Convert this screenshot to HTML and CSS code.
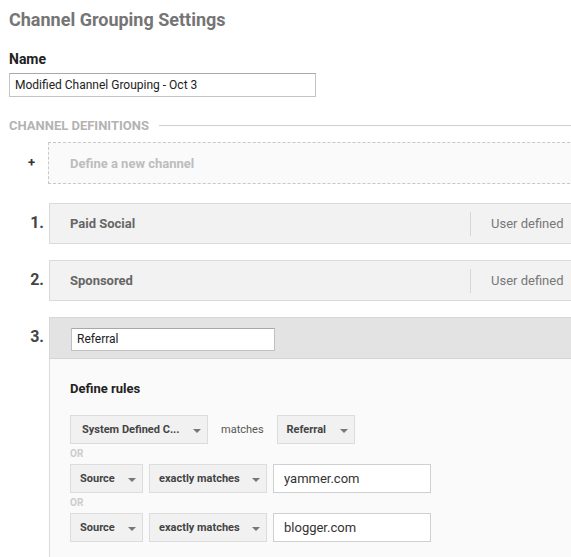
FILE: index.html
```html
<!DOCTYPE html>
<html>
<head>
<meta charset="utf-8">
<link rel="stylesheet" href="styles.css">
</head>
<body>
<div class="page">
  <h1 class="title">Channel Grouping Settings</h1>
  <div class="label">Name</div>
  <div class="name-input">Modified Channel Grouping - Oct 3</div>
  <div class="section-head"><span>CHANNEL DEFINITIONS</span><div class="rule-line"></div></div>
</div>

<div class="channels">
  <div class="item item-new">
    <div class="plus">+</div>
    <div class="new-box">Define a new channel</div>
  </div>

  <div class="item">
    <div class="num">1.</div>
    <div class="box">
      <div class="box-name">Paid Social</div>
      <div class="box-type">User defined</div>
    </div>
  </div>

  <div class="item">
    <div class="num">2.</div>
    <div class="box">
      <div class="box-name">Sponsored</div>
      <div class="box-type">User defined</div>
    </div>
  </div>

  <div class="item item-open">
    <div class="num">3.</div>
    <div class="open">
      <div class="open-head">
        <div class="head-input">Referral</div>
      </div>
      <div class="open-body">
        <div class="rules-title">Define rules</div>
        <div class="rule-row">
          <div class="sel w-sys"><span>System Defined C...</span><i class="caret"></i></div>
          <div class="op">matches</div>
          <div class="sel w-ref"><span>Referral</span><i class="caret"></i></div>
        </div>
        <div class="or">OR</div>
        <div class="rule-row">
          <div class="sel w-src"><span>Source</span><i class="caret"></i></div>
          <div class="sel w-exact"><span>exactly matches</span><i class="caret"></i></div>
          <div class="val">yammer.com</div>
        </div>
        <div class="or">OR</div>
        <div class="rule-row">
          <div class="sel w-src"><span>Source</span><i class="caret"></i></div>
          <div class="sel w-exact"><span>exactly matches</span><i class="caret"></i></div>
          <div class="val">blogger.com</div>
        </div>
      </div>
    </div>
  </div>
</div>
</body>
</html>
```

FILE: styles.css
```css
html, body {
  margin: 0;
  padding: 0;
  overflow: hidden;
  background: #fff;
}
body {
  font-family: Roboto, "Liberation Sans", Arial, sans-serif;
  color: #333;
}
.page {
  padding-left: 9px;
}
.title {
  margin: 10px 0 0;
  font-size: 18px;
  line-height: 20px;
  font-weight: 700;
  color: #757575;
}
.label {
  margin-top: 21px;
  font-size: 14px;
  line-height: 16px;
  font-weight: 700;
  color: #222;
}
.name-input {
  margin-top: 6px;
  box-sizing: border-box;
  width: 307px;
  height: 24px;
  border: 1px solid #c4c4c4;
  border-top-color: #a8a8a8;
  padding-left: 5px;
  font-size: 12px;
  line-height: 22px;
  color: #222;
  background: #fff;
}
.section-head {
  margin-top: 21px;
  display: flex;
  align-items: center;
  font-size: 13px;
  line-height: 15px;
  font-weight: 700;
  color: #b3b3b3;
}
.rule-line {
  flex: 1;
  height: 1px;
  background: #cfcfcf;
  margin-left: 10px;
}
.channels {
  margin-top: 9px;
  width: 620px;
}
.item {
  display: flex;
  margin-bottom: 16px;
}
.item-new {
  margin-bottom: 19px;
}
.plus {
  width: 48px;
  box-sizing: border-box;
  padding-right: 13px;
  text-align: right;
  font-size: 13px;
  font-weight: 700;
  color: #333;
  line-height: 42px;
}
.new-box {
  flex: 1;
  box-sizing: border-box;
  height: 42px;
  border: 1px dashed #c8c8c8;
  background: #fafafa;
  padding-left: 21px;
  line-height: 41px;
  font-size: 13px;
  font-weight: 700;
  color: #bdbdbd;
}
.num {
  width: 49px;
  box-sizing: border-box;
  padding-right: 5px;
  text-align: right;
  font-size: 16px;
  font-weight: 700;
  color: #444;
  line-height: 39px;
}
.box {
  flex: 1;
  box-sizing: border-box;
  height: 41px;
  border: 1px solid #dadada;
  background: #f2f2f2;
  display: flex;
  align-items: center;
}
.box-name {
  flex: 1;
  padding-left: 20px;
  font-size: 13px;
  font-weight: 700;
  color: #666;
}
.box-type {
  width: 149px;
  box-sizing: border-box;
  border-left: 1px solid #d6d6d6;
  height: 24px;
  line-height: 24px;
  padding-left: 20px;
  font-size: 13px;
  color: #777;
}
.open {
  flex: 1;
}
.open-head {
  box-sizing: border-box;
  height: 42px;
  background: #e3e3e3;
  border: 1px solid #d8d8d8;
  border-bottom-color: #d4d4d4;
  padding: 10px 0 0 21px;
}
.head-input {
  box-sizing: border-box;
  width: 204px;
  height: 23px;
  background: #fff;
  border: 1px solid #c0c0c0;
  border-top-color: #a8a8a8;
  padding-left: 5px;
  font-size: 12px;
  line-height: 21px;
  color: #222;
}
.open-body {
  background: #fafafa;
  border-left: 1px solid #dadada;
  padding: 22px 0 30px 20px;
}
.rules-title {
  font-size: 13px;
  line-height: 15px;
  font-weight: 700;
  color: #222;
  margin-bottom: 19px;
}
.rule-row {
  display: flex;
  align-items: center;
  gap: 6px;
  height: 29px;
}
.sel {
  box-sizing: border-box;
  height: 29px;
  border: 1px solid #dcdcdc;
  background: #f1f1f1;
  display: flex;
  align-items: center;
  justify-content: space-between;
  padding: 0 6px 0 9px;
  font-size: 11px;
  font-weight: 700;
  color: #444;
}
.w-sys { width: 138px; padding-left: 11px; }
.w-ref { width: 78px; }
.w-src { width: 73px; }
.w-exact { width: 118px; }
.caret {
  width: 0;
  height: 0;
  border-left: 4px solid transparent;
  border-right: 4px solid transparent;
  border-top: 4px solid #777;
  margin-top: 2px;
}
.op {
  font-size: 11px;
  color: #555;
  padding: 0 7px 0 7px;
}
.val {
  box-sizing: border-box;
  width: 158px;
  height: 29px;
  border: 1px solid #cfcfcf;
  background: #fff;
  padding-left: 10px;
  font-size: 13px;
  line-height: 27px;
  color: #333;
}
.or {
  margin: 4px 0;
  font-size: 10px;
  line-height: 12px;
  font-weight: 700;
  color: #cccccc;
}
```
